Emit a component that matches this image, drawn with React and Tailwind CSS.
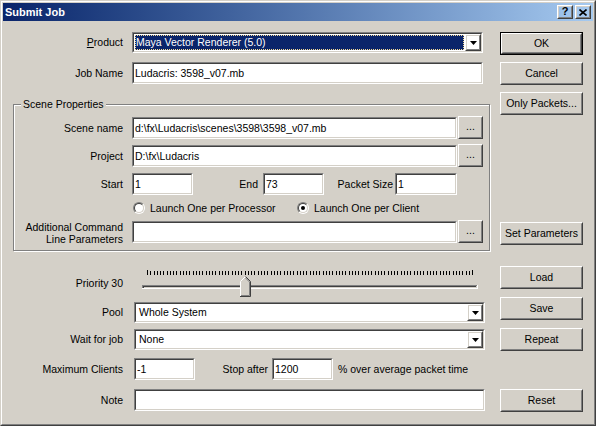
import React from "react";

// Win2000-style chrome pieces
const Sunken = ({ className = "", inner = "", children }) => (
  <div className={`border border-t-[#808080] border-l-[#808080] border-r-white border-b-white ${className}`}>
    <div className={`h-full border border-t-[#404040] border-l-[#404040] border-r-[#d4d0c8] border-b-[#d4d0c8] bg-white flex items-center ${inner}`}>
      {children}
    </div>
  </div>
);

const Raised = ({ className = "", children }) => (
  <div className={`border border-t-white border-l-white border-r-[#404040] border-b-[#404040] ${className}`}>
    <div className="h-full border border-t-[#d4d0c8] border-l-[#d4d0c8] border-r-[#808080] border-b-[#808080] flex items-center justify-center whitespace-nowrap">
      {children}
    </div>
  </div>
);

const Button = ({ className = "", isDefault, children }) =>
  isDefault ? (
    <div className={`border border-black ${className}`}>
      <Raised className="h-full">{children}</Raised>
    </div>
  ) : (
    <Raised className={className}>{children}</Raised>
  );

const Arrow = () => (
  <svg width="7" height="4" viewBox="0 0 7 4" className="ml-px mt-px">
    <polygon points="0,0 7,0 3.5,4" fill="#000" />
  </svg>
);

const Combo = ({ className = "", selected, children }) => (
  <Sunken className={`h-[21px] ${className}`}>
    <div className="flex-1 h-full p-px flex">
      {selected ? (
        <div className="flex-1 bg-[#0a246a] text-white border border-dotted border-[#f5db95] flex items-center">
          {children}
        </div>
      ) : (
        <div className="flex-1 flex items-center pl-[2px]">{children}</div>
      )}
    </div>
    <Raised className="h-full w-[16px] shrink-0">
      <Arrow />
    </Raised>
  </Sunken>
);

const Edit = ({ className = "", children }) => (
  <Sunken className={`h-[22px] shrink-0 ${className}`} inner="pl-px whitespace-nowrap">
    {children}
  </Sunken>
);

const Browse = () => (
  <Button className="w-[25px] h-[23px] ml-px -mt-px shrink-0">
    <span className="-mt-[3px]">...</span>
  </Button>
);

const Radio = ({ checked }) => (
  <span className="w-[12px] h-[12px] rounded-full border border-t-[#808080] border-l-[#808080] border-r-white border-b-white flex shrink-0">
    <span className="flex-1 rounded-full border border-t-[#404040] border-l-[#404040] border-r-[#d4d0c8] border-b-[#d4d0c8] bg-white flex items-center justify-center">
      {checked && <span className="w-[4px] h-[4px] rounded-full bg-black" />}
    </span>
  </span>
);

const Label = ({ className = "w-[120px]", children }) => (
  <div className={`${className} text-right whitespace-nowrap shrink-0`}>{children}</div>
);

const Slider = ({ value }) => {
  const ticks = [];
  for (let i = 0; i <= 100; i++) {
    const x = 7 + Math.round(i * 3.25) + 0.5;
    const top = i === 0 || i === 100 ? 2 : 3;
    ticks.push(<line key={i} x1={x} y1={top} x2={x} y2={7} stroke="#000" strokeWidth="1" />);
  }
  const cx = 7 + Math.round(value * 3.25);
  const l = cx - 5;
  const r = cx + 5;
  return (
    <svg width="340" height="30" viewBox="0 0 340 30" className="ml-[17px] shrink-0">
      {ticks}
      <rect x="2" y="17" width="335" height="1" fill="#808080" />
      <rect x="2" y="17" width="1" height="4" fill="#808080" />
      <rect x="3" y="18" width="333" height="1" fill="#404040" />
      <rect x="3" y="18" width="1" height="2" fill="#404040" />
      <rect x="2" y="20" width="336" height="1" fill="#fff" />
      <rect x="337" y="17" width="1" height="4" fill="#fff" />
      <polygon points={`${l},29 ${l},13 ${cx},8 ${r + 1},14 ${r + 1},29`} fill="#d4d0c8" />
      <path d={`M${l + 0.5} 28 V13.5 L${cx + 0.5} 8.5`} stroke="#fff" fill="none" />
      <path d={`M${cx + 0.5} 8.5 L${r + 0.5} 13.5 V28.5 H${l}`} stroke="#404040" fill="none" />
      <path d={`M${cx + 0.5} 10 L${r - 0.5} 14 V27.5 H${l + 1}`} stroke="#808080" fill="none" />
    </svg>
  );
};

const TitleButton = ({ children }) => (
  <Raised className="w-[16px] h-[14px] text-black">{children}</Raised>
);

export default function App() {
  return (
    <div className="w-[596px] h-[426px] bg-[#d4d0c8] border border-t-[#d4d0c8] border-l-[#d4d0c8] border-r-[#404040] border-b-[#404040] font-['Liberation_Sans',Arial,sans-serif] text-[10.5px] text-black leading-none select-none">
      <div className="h-full border border-t-white border-l-white border-r-[#808080] border-b-[#808080] p-px flex flex-col">
        {/* title bar */}
        <div className="h-[18px] shrink-0 bg-linear-to-r from-[#0a246a] to-[#a6caf0] flex items-center pl-[2px] pr-[2px]">
          <span className="text-white font-bold text-[11px]">Submit Job</span>
          <div className="ml-auto flex gap-[2px]">
            <TitleButton>
              <span className="font-bold text-[11px] -mt-px">?</span>
            </TitleButton>
            <TitleButton>
              <svg width="8" height="7" viewBox="0 0 8 7">
                <path d="M0.5 0.5 L7.5 6.5 M7.5 0.5 L0.5 6.5" stroke="#000" strokeWidth="1.6" />
              </svg>
            </TitleButton>
          </div>
        </div>

        <div className="flex flex-1">
          {/* left column */}
          <div className="w-[497px] shrink-0 pt-[11px] flex flex-col">
            <div className="flex items-center h-[21px]">
              <Label>
                <span className="underline">P</span>roduct
              </Label>
              <Combo className="w-[351px] ml-[9px]" selected>
                Maya Vector Renderer (5.0)
              </Combo>
            </div>
            <div className="flex items-center h-[22px] mt-[9px]">
              <Label>Job Name</Label>
              <Edit className="w-[351px] ml-[9px]">Ludacris: 3598_v07.mb</Edit>
            </div>

            {/* Scene Properties group */}
            <div className="relative ml-[10px] mt-[20px] w-[477px] h-[147px] border border-[#808080] shadow-[1px_1px_0_#fff,inset_1px_1px_0_#fff] pt-[12px]">
              <span className="absolute -top-[6px] left-[7px] bg-[#d4d0c8] px-[2px]">Scene Properties</span>
              <div className="flex items-start h-[22px]">
                <Label className="w-[109px] self-center">Scene name</Label>
                <Edit className="w-[325px] ml-[9px]">d:\fx\Ludacris\scenes\3598\3598_v07.mb</Edit>
                <Browse />
              </div>
              <div className="flex items-start h-[22px] mt-[6px]">
                <Label className="w-[109px] self-center">Project</Label>
                <Edit className="w-[325px] ml-[9px]">D:\fx\Ludacris</Edit>
                <Browse />
              </div>
              <div className="flex items-center h-[22px] mt-[6px]">
                <Label className="w-[109px]">Start</Label>
                <Edit className="w-[61px] ml-[9px]">1</Edit>
                <Label className="w-[65px]">End</Label>
                <Edit className="w-[61px] ml-[5px]">73</Edit>
                <Label className="w-[69px]">Packet Size</Label>
                <Edit className="w-[62px] ml-[2px]">1</Edit>
              </div>
              <div className="flex items-center h-[18px] mt-[4px] pl-[119px]">
                <div className="w-[164px] flex items-center">
                  <Radio />
                  <span className="ml-[5px]">Launch One per Processor</span>
                </div>
                <div className="flex items-center">
                  <Radio checked />
                  <span className="ml-[5px]">Launch One per Client</span>
                </div>
              </div>
              <div className="flex items-center h-[22px] mt-[4px]">
                <Label className="w-[109px] leading-[12px] mt-[2px]">
                  Additional Command
                  <br />
                  Line Parameters
                </Label>
                <Edit className="w-[325px] ml-[9px]" />
                <Browse />
              </div>
            </div>

            <div className="flex items-center h-[30px] mt-[17px]">
              <Label>Priority 30</Label>
              <Slider value={30} />
            </div>
            <div className="flex items-center h-[21px] mt-[4px]">
              <Label>Pool</Label>
              <Combo className="w-[351px] ml-[11px]">Whole System</Combo>
            </div>
            <div className="flex items-center h-[21px] mt-[6px]">
              <Label>Wait for job</Label>
              <Combo className="w-[351px] ml-[11px]">None</Combo>
            </div>
            <div className="flex items-center h-[22px] mt-[8px]">
              <Label>Maximum Clients</Label>
              <Edit className="w-[61px] ml-[11px]">-1</Edit>
              <Label className="w-[73px]">Stop after</Label>
              <Edit className="w-[61px] ml-[4px]">1200</Edit>
              <span className="ml-[5px] whitespace-nowrap">% over average packet time</span>
            </div>
            <div className="flex items-center h-[22px] mt-[9px]">
              <Label>Note</Label>
              <Edit className="w-[351px] ml-[11px]" />
            </div>
          </div>

          {/* right button column */}
          <div className="w-[83px] shrink-0 pt-[11px] flex flex-col">
            <Button className="h-[23px]" isDefault>OK</Button>
            <Button className="h-[23px] mt-[7px]">Cancel</Button>
            <Button className="h-[23px] mt-[7px]">Only Packets...</Button>
            <Button className="h-[23px] mt-[107px]">Set Parameters</Button>
            <Button className="h-[23px] mt-[21px]">Load</Button>
            <Button className="h-[23px] mt-[8px]">Save</Button>
            <Button className="h-[23px] mt-[8px]">Repeat</Button>
            <Button className="h-[23px] mt-[38px]">Reset</Button>
          </div>
        </div>
      </div>
    </div>
  );
}
